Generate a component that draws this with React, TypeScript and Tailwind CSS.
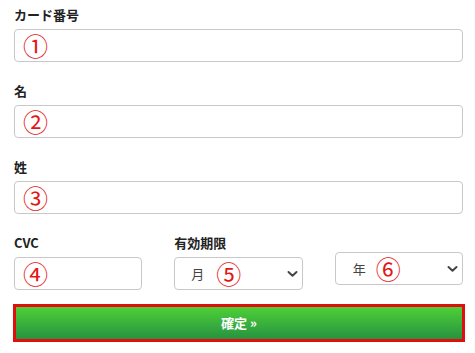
import React from "react";

const font = { fontFamily: '"Noto Sans CJK JP", "Noto Sans", sans-serif' };

function Chevron() {
  return (
    <svg width="11" height="7" viewBox="0 0 11 7" className="absolute right-[4px] top-1/2 -translate-y-1/2">
      <path d="M1.5 1.5 L5.5 5.2 L9.5 1.5" fill="none" stroke="#444" strokeWidth="2" strokeLinecap="round" strokeLinejoin="round" />
    </svg>
  );
}

function Field({ label, num }: { label: string; num: string }) {
  return (
    <div className="flex flex-col">
      <div className="text-[13px] font-bold text-[#222] leading-[16px] h-[16px] mb-[6px]">{label}</div>
      <div className="h-[33px] border border-[#c8c8c8] rounded-[4px] bg-white flex items-center pl-[8px]">
        <span className="text-[25px] leading-none text-[#e51515]">{num}</span>
      </div>
    </div>
  );
}

export default function App() {
  return (
    <div className="w-[475px] h-[353px] bg-white px-[14px] pt-[7px] box-border" style={font}>
      <div className="flex flex-col gap-[21px] w-[449px]">
        <Field label="カード番号" num="①" />
        <Field label="名" num="②" />
        <Field label="姓" num="③" />
      </div>
      <div className="grid grid-cols-3 gap-x-[32px] w-[449px] mt-[21px]">
        <Field label="CVC" num="④" />
        <div className="flex flex-col">
          <div className="text-[13px] font-bold text-[#222] leading-[16px] h-[16px] mb-[6px]">有効期限</div>
          <div className="relative h-[33px] border border-[#c8c8c8] rounded-[4px] bg-white flex items-center pl-[16px]">
            <span className="text-[13px] text-[#444] mr-[12px]">月</span>
            <span className="text-[25px] leading-none text-[#e51515]">⑤</span>
            <Chevron />
          </div>
        </div>
        <div className="flex flex-col pt-[17px]">
          <div className="relative h-[33px] border border-[#c8c8c8] rounded-[4px] bg-white flex items-center pl-[17px]">
            <span className="text-[13px] text-[#444] mr-[10px]">年</span>
            <span className="text-[25px] leading-none text-[#e51515]">⑥</span>
            <Chevron />
          </div>
        </div>
      </div>
      <div className="mt-[14px] -ml-[1px] w-[452px] h-[38px] border-[3px] border-[#e00f0f] bg-gradient-to-b from-[#4fd035] to-[#25933f] flex items-center justify-center">
        <span className="text-[13px] font-bold text-white">確定 »</span>
      </div>
    </div>
  );
}
